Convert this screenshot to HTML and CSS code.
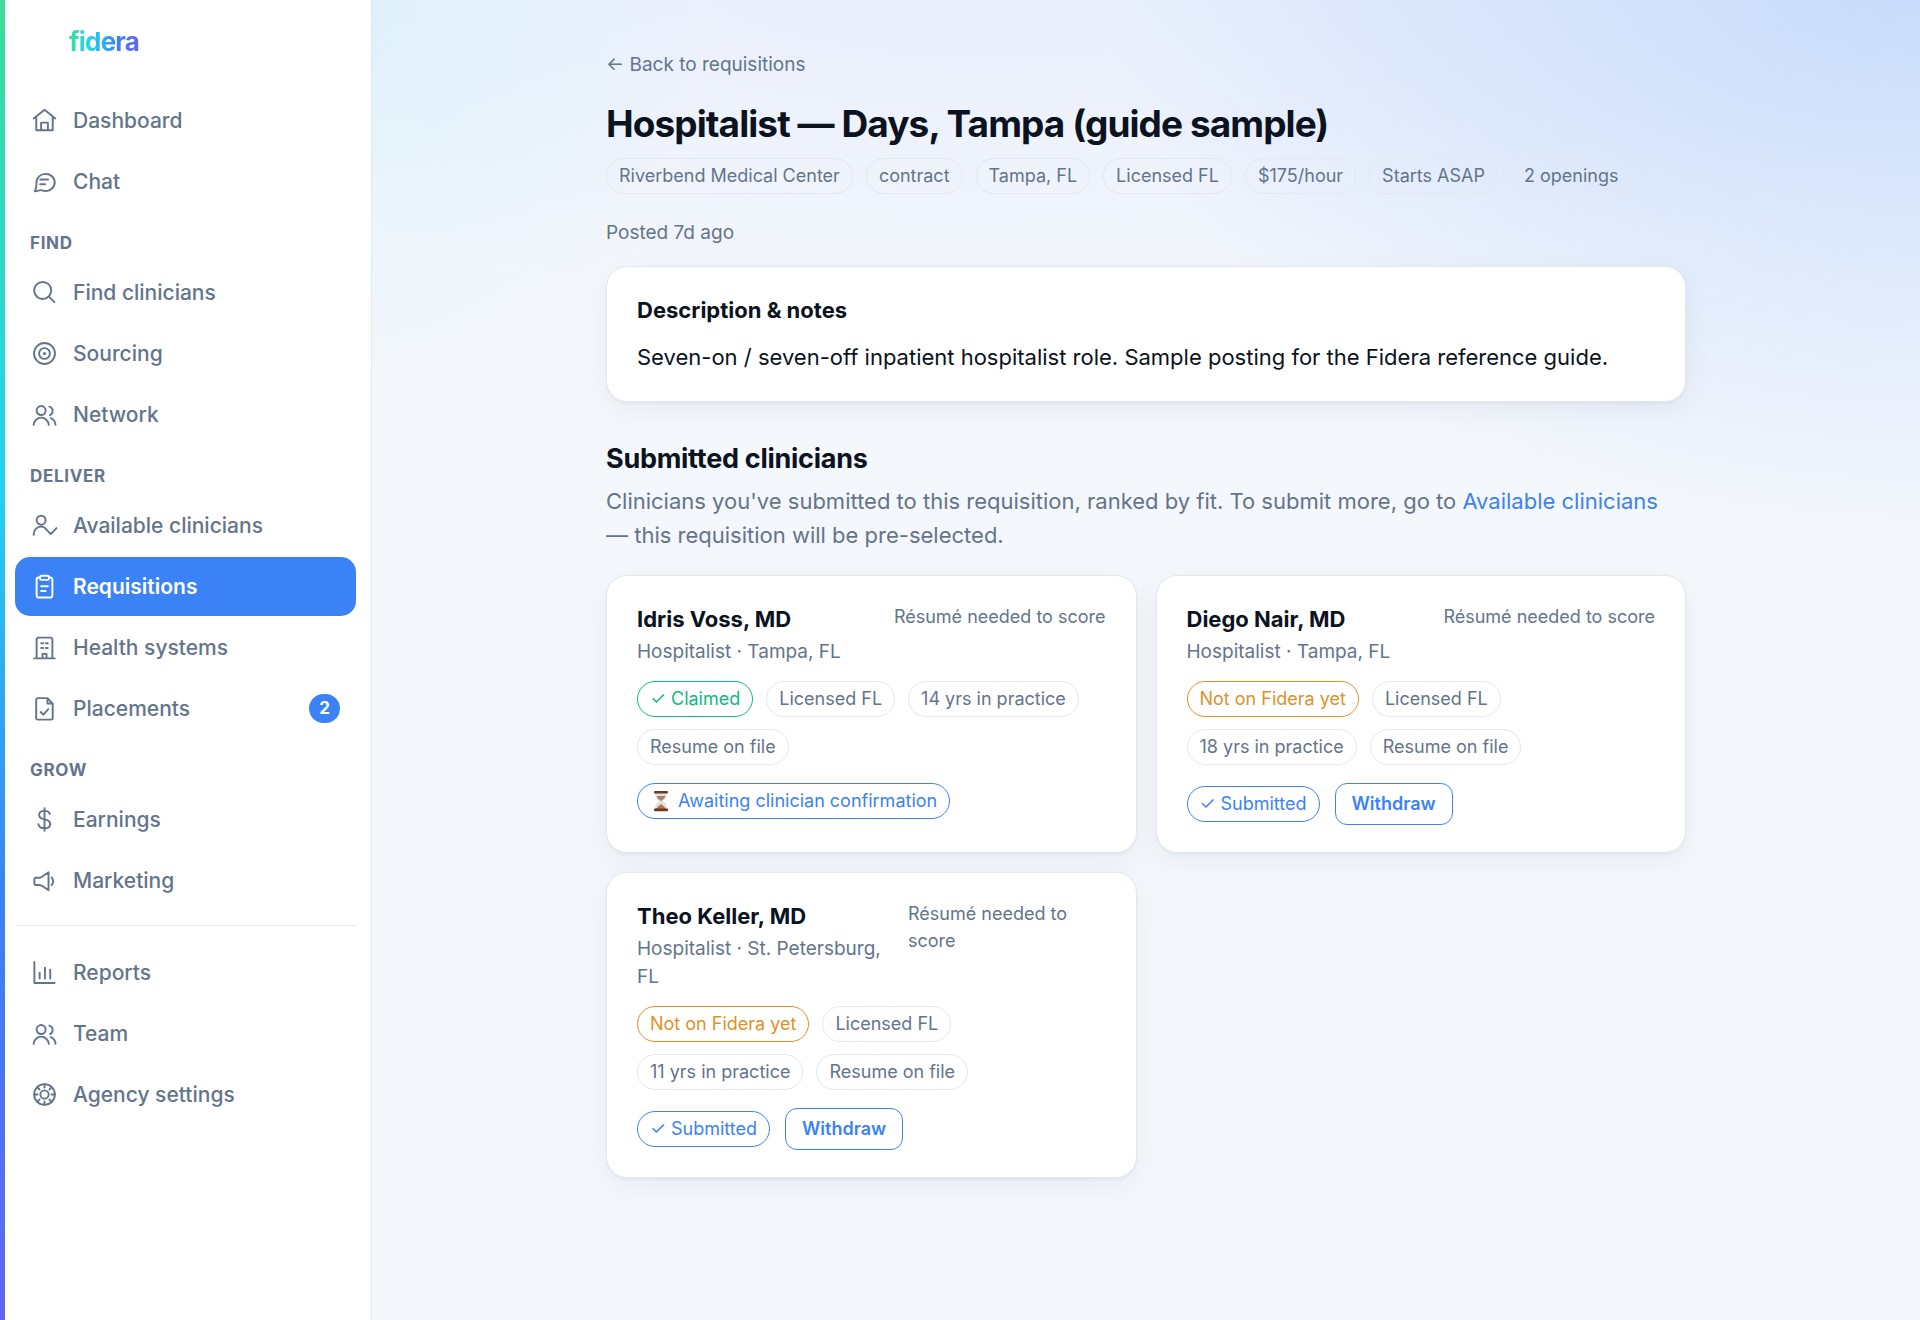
FILE: index.html
```html
<!DOCTYPE html>
<html lang="en">
  <head>
    <meta charset="utf-8">
    <title>Hospitalist — Days, Tampa (guide sample) · fidera</title>
    <link rel="stylesheet" href="styles.css">
  </head>
  <body>
    <aside class="sidebar">
      <a class="brand" href="#">fidera</a>
      <nav class="nav">
        <a class="nav-item" href="#">
          <svg class="icon" viewBox="0 0 24 24"><path d="M2.4 10.2 12 2.4l9.6 7.8M4.7 8.6v12.1h14.6V8.6M9 20.7v-6.8h6v6.8"/></svg>
          Dashboard
        </a>
        <a class="nav-item" href="#">
          <svg class="icon" viewBox="0 0 24 24"><path d="M3.4 20.8c1-2 1.5-4 1.5-7.3A8.1 7.6 0 1 1 9.8 19.8C7.8 19.2 6 20.8 3.4 20.8ZM8.2 10.2h7M8.2 14.4h4.3"/></svg>
          Chat
        </a>

        <h2 class="nav-label">Find</h2>
        <a class="nav-item" href="#">
          <svg class="icon" viewBox="0 0 24 24"><circle cx="10.4" cy="10.2" r="7.6"/><path d="m15.9 15.7 4.9 4.9"/></svg>
          Find clinicians
        </a>
        <a class="nav-item" href="#">
          <svg class="icon" viewBox="0 0 24 24"><circle cx="12" cy="12" r="9.3"/><circle cx="12" cy="12" r="4.8"/><circle class="dot" cx="12" cy="12" r="1.4"/></svg>
          Sourcing
        </a>
        <a class="nav-item" href="#">
          <svg class="icon" viewBox="0 0 24 24"><circle cx="9" cy="8.5" r="4"/><path d="M2.3 21.2a6.8 7.3 0 0 1 13.5 0M16.3 5a4 4 0 0 1 .6 7.5M17.7 15.2c2.4 1 3.9 3.2 4.1 6"/></svg>
          Network
        </a>

        <h2 class="nav-label">Deliver</h2>
        <a class="nav-item" href="#">
          <svg class="icon" viewBox="0 0 24 24"><circle cx="9" cy="7.3" r="4"/><path d="M2.3 20.3c.7-8 8.5-9.3 11.9-4.2l3.4 3.6 5-5.4"/></svg>
          Available clinicians
        </a>
        <a class="nav-item active" href="#" aria-current="page">
          <svg class="icon" viewBox="0 0 24 24"><path d="M8 4H6.7A1.7 1.7 0 0 0 5 5.7v14.4a1.7 1.7 0 0 0 1.7 1.7h10.6a1.7 1.7 0 0 0 1.7-1.7V5.7A1.7 1.7 0 0 0 17.3 4H16"/><rect x="8" y="2.5" width="8" height="3.6" rx="1.2"/><path d="M9 11.8h6M9 16h4"/></svg>
          Requisitions
        </a>
        <a class="nav-item" href="#">
          <svg class="icon" viewBox="0 0 24 24"><path d="M5 21.7V4.7A1.5 1.5 0 0 1 6.5 3.2h11A1.5 1.5 0 0 1 19 4.7v17M2.9 21.7h18.2M9.1 8.2h1.7M13.2 8.2h1.7M9.1 12.4h1.7M13.2 12.4h1.7M10.2 21.7v-4h3.6v4"/></svg>
          Health systems
        </a>
        <a class="nav-item" href="#">
          <svg class="icon" viewBox="0 0 24 24"><path d="M14.6 2.8H6A1.4 1.4 0 0 0 4.6 4.2v16.3A1.4 1.4 0 0 0 6 21.9h11.9a1.4 1.4 0 0 0 1.4-1.4V7.6ZM14.6 2.8v4.8h4.7M8.5 15.1l2.5 2.4 4.4-4.9"/></svg>
          Placements
          <span class="count">2</span>
        </a>

        <h2 class="nav-label">Grow</h2>
        <a class="nav-item" href="#">
          <svg class="icon" viewBox="0 0 24 24"><path d="M12 2v20M16.7 7.2C16.3 5.2 14.6 4.3 12 4.3c-2.8 0-4.8 1.3-4.8 3.7 0 2.6 2.3 3.4 4.8 3.9s5.1 1.3 5.1 4c0 2.5-2.2 3.9-5.1 3.9-3.1 0-5.1-1.2-5.4-3.7"/></svg>
          Earnings
        </a>
        <a class="nav-item" href="#">
          <svg class="icon" viewBox="0 0 24 24"><path d="M15.6 4.7v16L9.8 16.7 7.6 16H4.2A1.2 1.2 0 0 1 3 14.8v-4A1.2 1.2 0 0 1 4.2 9.6h3.4l2.2-.9ZM18.3 9.3c1.9 1.6 1.9 5.2 0 6.8"/></svg>
          Marketing
        </a>

        <hr class="nav-divider">
        <a class="nav-item" href="#">
          <svg class="icon" viewBox="0 0 24 24"><path d="M3 2.7v18.6h18M7.7 12.2v5.2M12.4 7.8v9.6M17.1 9.6v7.8"/></svg>
          Reports
        </a>
        <a class="nav-item" href="#">
          <svg class="icon" viewBox="0 0 24 24"><circle cx="9" cy="8.5" r="4"/><path d="M2.3 21.2a6.8 7.3 0 0 1 13.5 0M16.3 5a4 4 0 0 1 .6 7.5M17.7 15.2c2.4 1 3.9 3.2 4.1 6"/></svg>
          Team
        </a>
        <a class="nav-item" href="#">
          <svg class="icon" viewBox="0 0 24 24"><circle cx="12" cy="12" r="9.2"/><circle cx="12" cy="12" r="3.7"/><path d="M12 2.8v3M12 18.2v3M2.8 12h3M18.2 12h3M5.5 5.5l2.1 2.1M16.4 16.4l2.1 2.1M5.5 18.5l2.1-2.1M16.4 7.6l2.1-2.1"/></svg>
          Agency settings
        </a>
      </nav>
    </aside>

    <main class="main">
      <div class="page">
        <a class="back" href="#">← Back to requisitions</a>
        <h1>Hospitalist — Days, Tampa (guide sample)</h1>
        <div class="pills">
          <span class="pill">Riverbend Medical Center</span>
          <span class="pill">contract</span>
          <span class="pill">Tampa, FL</span>
          <span class="pill">Licensed FL</span>
          <span class="pill">$175/hour</span>
          <span class="pill">Starts ASAP</span>
          <span class="pill">2 openings</span>
        </div>
        <p class="posted">Posted 7d ago</p>

        <section class="card">
          <h3 class="card-title">Description &amp; notes</h3>
          <p>Seven-on / seven-off inpatient hospitalist role. Sample posting for the Fidera reference guide.</p>
        </section>

        <h2 class="section-title">Submitted clinicians</h2>
        <p class="section-intro">Clinicians you've submitted to this requisition, ranked by fit. To submit more, go to <a href="#">Available clinicians</a> — this requisition will be pre-selected.</p>

        <div class="clinicians">
          <article class="card">
            <div class="card-head">
              <div>
                <h3>Idris Voss, MD</h3>
                <p class="meta">Hospitalist · Tampa, FL</p>
              </div>
              <span class="score">Résumé needed to score</span>
            </div>
            <div class="pills">
              <span class="pill good">✓ Claimed</span>
              <span class="pill">Licensed FL</span>
              <span class="pill">14 yrs in practice</span>
              <span class="pill">Resume on file</span>
            </div>
            <div class="actions">
              <span class="pill info">
                <svg class="hourglass" viewBox="0 0 22 22">
                  <path fill="#dfe3e6" d="M5 3h12c0 4-1.5 6-4.5 8 3 2 4.5 4 4.5 8H5c0-4 1.5-6 4.5-8C6.5 9 5 7 5 3Z"/>
                  <path fill="#a9826a" d="M6.5 6h9c-.7 2-2 3.5-4.5 5-2.5-1.5-3.8-3-4.5-5Z"/>
                  <path fill="#b5773c" d="M6 19c1-2 3-3 5-5 2 2 4 3 5 5Z"/>
                  <rect fill="#6b3a22" x="4" y="1" width="14" height="2.6" rx="1"/>
                  <rect fill="#6b3a22" x="4" y="18.6" width="14" height="2.6" rx="1"/>
                </svg>
                Awaiting clinician confirmation
              </span>
            </div>
          </article>

          <article class="card">
            <div class="card-head">
              <div>
                <h3>Diego Nair, MD</h3>
                <p class="meta">Hospitalist · Tampa, FL</p>
              </div>
              <span class="score">Résumé needed to score</span>
            </div>
            <div class="pills">
              <span class="pill warn">Not on Fidera yet</span>
              <span class="pill">Licensed FL</span>
              <span class="pill">18 yrs in practice</span>
              <span class="pill">Resume on file</span>
            </div>
            <div class="actions">
              <span class="pill info">✓ Submitted</span>
              <button class="button" type="button">Withdraw</button>
            </div>
          </article>

          <article class="card">
            <div class="card-head">
              <div>
                <h3>Theo Keller, MD</h3>
                <p class="meta">Hospitalist · St. Petersburg, FL</p>
              </div>
              <span class="score">Résumé needed to score</span>
            </div>
            <div class="pills">
              <span class="pill warn">Not on Fidera yet</span>
              <span class="pill">Licensed FL</span>
              <span class="pill">11 yrs in practice</span>
              <span class="pill">Resume on file</span>
            </div>
            <div class="actions">
              <span class="pill info">✓ Submitted</span>
              <button class="button" type="button">Withdraw</button>
            </div>
          </article>
        </div>
      </div>
    </main>
  </body>
</html>
```

FILE: styles.css
```css
:root {
  --ink: #0b1220;
  --muted: #64748b;
  --line: #e2e8f0;
  --blue: #3b82f6;
  --green: #10b981;
  --amber: #e0912a;
}

* {
  box-sizing: border-box;
}

body {
  display: flex;
  min-height: 100vh;
  margin: 0;
  color: var(--ink);
  background:
    radial-gradient(ellipse 820px 580px at 100% -40px, rgba(59, 130, 246, 0.24), transparent 100%),
    radial-gradient(ellipse 360px 400px at 340px 0, rgba(34, 211, 238, 0.08), transparent 100%),
    radial-gradient(ellipse 1100px 380px at 1000px -60px, rgba(69, 120, 241, 0.08), transparent 100%),
    #f4f7fc;
  font: 22px/34px Inter, "Liberation Sans", sans-serif;
}

h1,
h2,
h3,
p {
  margin: 0;
}

a {
  color: var(--blue);
  text-decoration: none;
}

/* Sidebar */

.sidebar {
  position: relative;
  flex: none;
  width: 372px;
  padding: 24px 15px;
  background: #fff;
  border-right: 1px solid var(--line);
}

.sidebar::before {
  content: "";
  position: absolute;
  inset: 0 auto 0 0;
  width: 5px;
  background: linear-gradient(#3ddc97, #22d3ee 36%, #3b82f6 68%, #6366f1);
}

.brand {
  display: block;
  width: max-content;
  margin: 0 0 31px 54px;
  font-size: 26px;
  font-weight: 700;
  line-height: 36px;
  letter-spacing: -0.03em;
  color: transparent;
  background: linear-gradient(90deg, #3ddc97, #22d3ee 30%, #3b82f6 70%, #6366f1);
  -webkit-background-clip: text;
  background-clip: text;
}

.nav-item {
  display: flex;
  align-items: center;
  gap: 15px;
  height: 59px;
  margin-bottom: 2px;
  padding: 0 16px;
  border-radius: 15px;
  color: var(--muted);
  font-size: 21px;
  font-weight: 500;
}

.nav-item.active {
  color: #fff;
  background: var(--blue);
  font-weight: 600;
}

.nav-label {
  padding: 20px 15px 10px;
  color: var(--muted);
  font-size: 17px;
  font-weight: 700;
  line-height: 20px;
  letter-spacing: 0.04em;
  text-transform: uppercase;
}

.nav-divider {
  height: 1px;
  margin: 15px 0 17px;
  border: 0;
  background: var(--line);
}

.icon {
  flex: none;
  width: 27px;
  height: 27px;
  fill: none;
  stroke: currentColor;
  stroke-width: 1.7;
  stroke-linecap: round;
  stroke-linejoin: round;
}

.icon .dot {
  fill: currentColor;
  stroke: none;
}

.count {
  min-width: 31px;
  margin-left: auto;
  border-radius: 15px;
  color: #fff;
  background: var(--blue);
  font-size: 17px;
  font-weight: 700;
  line-height: 29px;
  text-align: center;
}

/* Page */

.main {
  flex: 1;
  min-width: 0;
  padding: 50px 36px 72px;
}

.page {
  max-width: 1080px;
  margin: 0 auto;
}

.back {
  display: block;
  width: max-content;
  color: var(--muted);
  font-size: 19px;
  line-height: 29px;
}

h1 {
  margin: 22px 0 12px;
  font-size: 37px;
  font-weight: 700;
  line-height: 45px;
  letter-spacing: -0.025em;
}

.pills {
  display: flex;
  flex-wrap: wrap;
  gap: 12px 13px;
}

.pill {
  display: inline-flex;
  align-items: center;
  padding: 3px 12px;
  border: 1px solid var(--line);
  border-radius: 18px;
  color: var(--muted);
  font-size: 18px;
  line-height: 28px;
}

.pill.good {
  color: var(--green);
  border-color: var(--green);
}

.pill.warn {
  color: var(--amber);
  border-color: var(--amber);
}

.pill.info {
  color: var(--blue);
  border-color: var(--blue);
}

.posted {
  margin: 24px 0 19px;
  color: var(--muted);
  font-size: 19px;
  line-height: 29px;
}

.card {
  padding: 26px 30px 27px;
  background: #fff;
  border: 1px solid var(--line);
  border-radius: 21px;
  box-shadow: 0 2px 3px rgba(15, 23, 42, 0.04), 0 9px 30px rgba(15, 23, 42, 0.05);
}

.card h3 {
  font-size: 22px;
  font-weight: 700;
}

.card .card-title {
  margin-bottom: 13px;
}

.section-title {
  margin: 40px 0 8px;
  font-size: 27px;
  font-weight: 700;
  letter-spacing: -0.01em;
}

.section-intro {
  margin-bottom: 23px;
  color: var(--muted);
}

.clinicians {
  display: grid;
  grid-template-columns: repeat(2, 1fr);
  gap: 19px;
}

.card-head {
  display: flex;
  justify-content: space-between;
  align-items: flex-start;
  gap: 18px;
  margin-bottom: 15px;
}

.meta {
  margin-top: 2px;
  color: var(--muted);
  font-size: 19px;
  line-height: 28px;
}

.score {
  margin-top: 1px;
  color: var(--muted);
  font-size: 18px;
  line-height: 27px;
}

.actions {
  display: flex;
  align-items: center;
  gap: 15px;
  margin-top: 18px;
}

.hourglass {
  width: 22px;
  height: 22px;
  margin-right: 6px;
}

.button {
  padding: 6px 16px;
  color: var(--blue);
  background: #fff;
  border: 1px solid var(--blue);
  border-radius: 12px;
  font: 600 18px/28px Inter, "Liberation Sans", sans-serif;
  cursor: pointer;
}
```
